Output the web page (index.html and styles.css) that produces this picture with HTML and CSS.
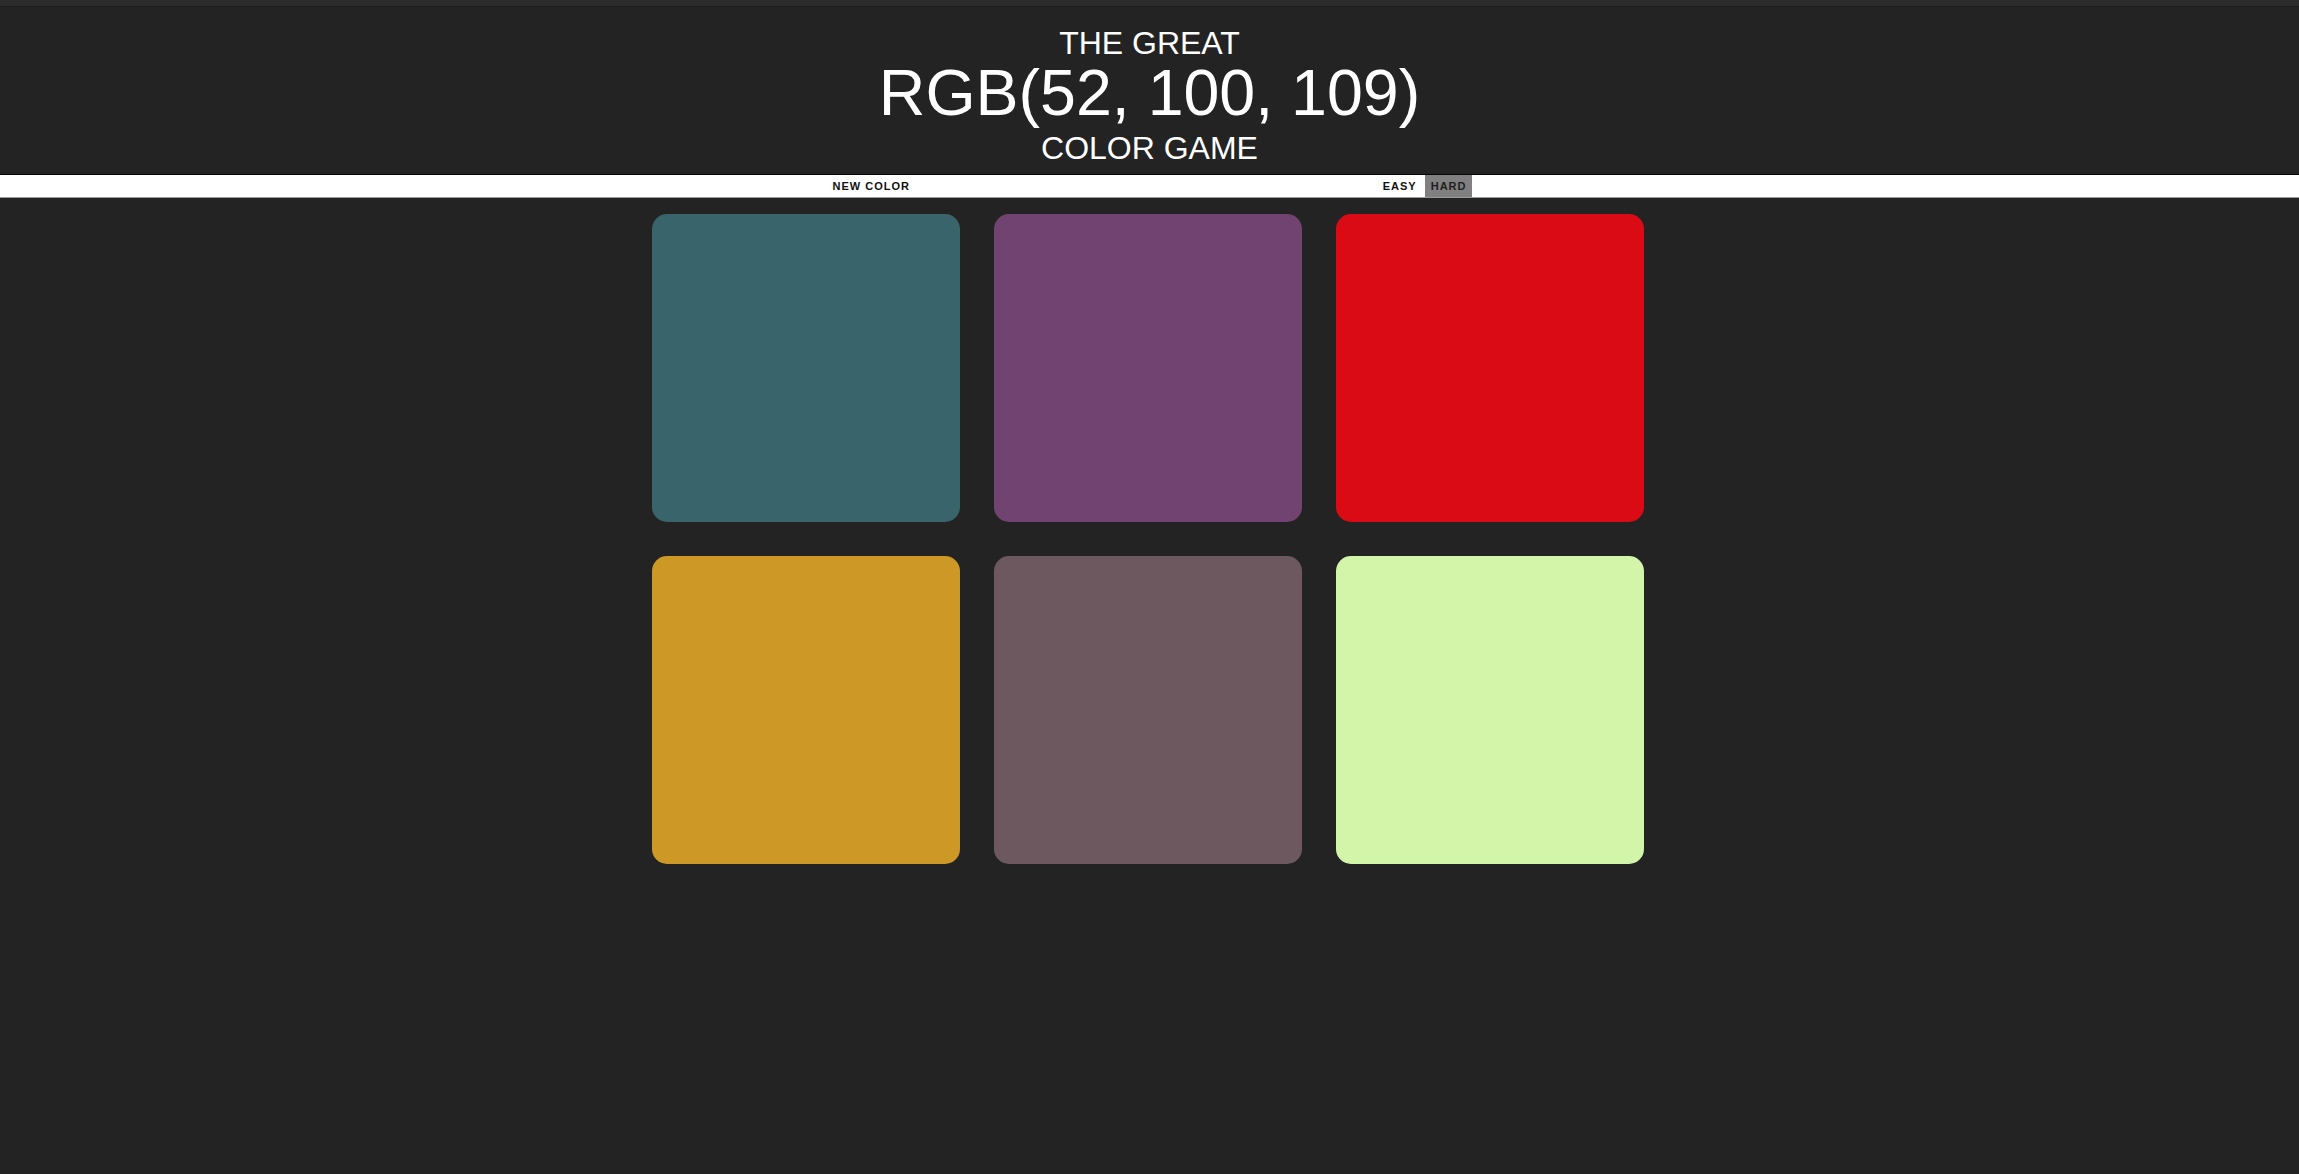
FILE: index.html
```html
<!DOCTYPE html>
<html lang="en">
<head>
<meta charset="utf-8">
<title>Color Game</title>
<link rel="stylesheet" href="styles.css">
</head>
<body>
<div class="topband"></div>
<h1 class="title">
  <span class="title-line title-small">The Great</span>
  <span class="title-line title-big">RGB(52, 100, 109)</span>
  <span class="title-line title-last">Color Game</span>
</h1>
<div class="stripe">
  <button class="btn">New Color</button>
  <span class="message"></span>
  <button class="btn">Easy</button>
  <button class="btn btn-selected">Hard</button>
</div>
<div class="board">
  <div class="square sq-teal"></div>
  <div class="square sq-purple"></div>
  <div class="square sq-red"></div>
  <div class="square sq-gold"></div>
  <div class="square sq-mauve"></div>
  <div class="square sq-lime"></div>
</div>
</body>
</html>
```

FILE: styles.css
```css
html, body {
  margin: 0;
  padding: 0;
}
body {
  background: #232323;
  font-family: "Liberation Sans", Arial, sans-serif;
  min-height: 1174px;
}
.topband {
  height: 6px;
  background: #2c2c2c;
  border-bottom: 1px solid #1c1c1c;
}
.title {
  margin: 0;
  padding: 17px 0 3px;
  color: #ffffff;
  font-weight: normal;
  text-align: center;
  text-transform: uppercase;
}
.title-line {
  display: block;
  font-size: 32px;
}
.title-small {
  line-height: 38px;
}
.title-big {
  font-size: 64.5px;
  line-height: 63px;
}
.title-last {
  line-height: 46px;
}
.stripe {
  display: flex;
  justify-content: center;
  gap: 3px;
  height: 22px;
  background: #ffffff;
  border-top: 1px solid #050505;
  border-bottom: 1px solid #9a9a9a;
}
.btn {
  border: none;
  background: none;
  margin: 0;
  padding: 1px 5.5px 0;
  height: 22px;
  font-family: "Liberation Sans", Arial, sans-serif;
  font-size: 11px;
  font-weight: 700;
  letter-spacing: 1px;
  text-transform: uppercase;
  color: #111111;
  line-height: 21px;
}
.btn-selected {
  background: #808080;
  color: #1e1e1e;
}
.message {
  display: block;
  width: calc(20% - 4px);
}
.board {
  display: grid;
  grid-template-columns: repeat(3, 308px);
  grid-auto-rows: 308px;
  gap: 34px;
  width: 992px;
  margin: 16px 0 0 calc(50% - 498px);
}
.square {
  border-radius: 15px;
}
.sq-teal { background: rgb(58, 100, 107); }
.sq-purple { background: rgb(113, 67, 112); }
.sq-red { background: rgb(219, 11, 22); }
.sq-gold { background: rgb(206, 152, 38); }
.sq-mauve { background: rgb(109, 88, 95); }
.sq-lime { background: rgb(211, 245, 170); }
```
